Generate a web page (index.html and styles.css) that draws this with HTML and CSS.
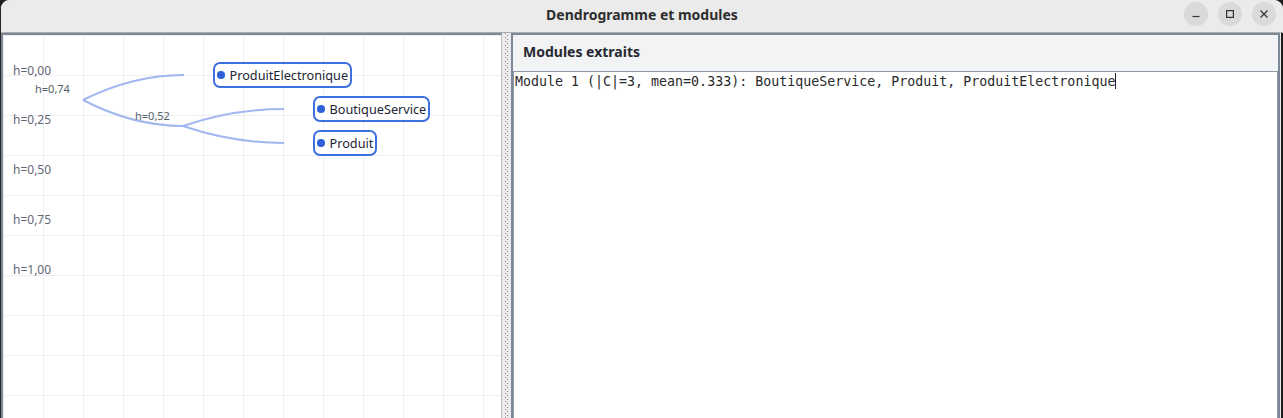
FILE: index.html
```html
<!DOCTYPE html>
<html lang="fr">
<head>
<meta charset="utf-8">
<title>Dendrogramme et modules</title>
<link rel="stylesheet" href="styles.css">
</head>
<body>
<div class="window">
  <header class="titlebar">
    <div class="title">Dendrogramme et modules</div>
    <div class="controls">
      <button class="ctl" aria-label="Réduire">
        <svg width="10" height="10" viewBox="0 0 10 10"><path d="M1.5 7.5h7" stroke="#333" stroke-width="1.2" fill="none"/></svg>
      </button>
      <button class="ctl" aria-label="Agrandir">
        <svg width="10" height="10" viewBox="0 0 10 10"><rect x="1.6" y="1.6" width="6.8" height="6.8" stroke="#333" stroke-width="1.2" fill="none"/></svg>
      </button>
      <button class="ctl" aria-label="Fermer">
        <svg width="10" height="10" viewBox="0 0 10 10"><path d="M1.5 1.5l7 7M8.5 1.5l-7 7" stroke="#333" stroke-width="1.2" fill="none"/></svg>
      </button>
    </div>
  </header>
  <main class="content">
    <section class="dendro">
      <svg class="links" width="498" height="383" viewBox="0 0 498 383">
        <g class="axis">
          <text x="10" y="40">h=0,00</text>
          <text x="10" y="89">h=0,25</text>
          <text x="10" y="139">h=0,50</text>
          <text x="10" y="189">h=0,75</text>
          <text x="10" y="239">h=1,00</text>
        </g>
        <g class="edges">
          <path d="M80 65 Q130 40 181 40"/>
          <path d="M80 65 Q130 91 180 91"/>
          <path d="M180 91 Q230 74 281 74"/>
          <path d="M180 91 Q230 108 281 108"/>
        </g>
        <g class="heights">
          <text x="32" y="58">h=0,74</text>
          <text x="132" y="85">h=0,52</text>
        </g>
      </svg>
      <div class="node" style="left:210px;top:27px"><span class="dot"></span>ProduitElectronique</div>
      <div class="node" style="left:310px;top:61px"><span class="dot"></span>BoutiqueService</div>
      <div class="node" style="left:310px;top:95px"><span class="dot"></span>Produit</div>
    </section>
    <div class="splitter"></div>
    <section class="modules">
      <div class="mod-header">Modules extraits</div>
      <div class="mod-text"><span>Module 1 (|C|=3, mean=0.333): BoutiqueService, Produit, ProduitElectronique</span><span class="caret"></span></div>
    </section>
  </main>
</div>
</body>
</html>
```
FILE: styles.css
```css
html, body {
  margin: 0;
  padding: 0;
  width: 1283px;
  height: 418px;
  overflow: hidden;
  background: #1e1e1e;
}

.window {
  width: 1283px;
  height: 418px;
  box-sizing: border-box;
  border-left: 1px solid #262626;
  border-top-left-radius: 9px;
  border-top-right-radius: 9px;
  overflow: hidden;
  display: flex;
  flex-direction: column;
  background: #ebebeb;
}

.titlebar {
  flex: none;
  height: 33px;
  box-sizing: border-box;
  padding-bottom: 4px;
  border-bottom: 1px solid #adadad;
  background: #ebebeb;
  display: grid;
  grid-template-columns: 1fr auto 1fr;
  align-items: center;
}

.title {
  grid-column: 2;
  font-family: "Noto Sans", "DejaVu Sans", sans-serif;
  font-weight: 700;
  font-size: 14px;
  color: #2e2e2e;
}

.controls {
  grid-column: 3;
  justify-self: end;
  display: flex;
  gap: 10px;
  padding-right: 7px;
}

.ctl {
  width: 24px;
  height: 24px;
  border: 0;
  padding: 0;
  border-radius: 50%;
  background: #dadada;
  display: grid;
  place-items: center;
}

.ctl svg { display: block; }

.content {
  flex: 1;
  min-height: 0;
  display: flex;
  border-right: 2px solid #1c1c1c;
  background: #ebebeb;
}

.dendro {
  position: relative;
  flex: none;
  width: 498px;
  border-top: 2px solid #7b8898;
  border-left: 2px solid #7b8898;
  border-right: 1px solid #b6bdc6;
  background-color: #ffffff;
  background-image:
    linear-gradient(to right, #eeeff1 1px, transparent 1px),
    linear-gradient(to bottom, #eeeff1 1px, transparent 1px);
  background-size: 40px 40px;
  overflow: hidden;
}

.links {
  position: absolute;
  left: 0;
  top: 0;
}

.axis text {
  font-family: "Noto Sans", "DejaVu Sans", sans-serif;
  font-size: 12px;
  fill: #5f6877;
}

.heights text {
  font-family: "Noto Sans", "DejaVu Sans", sans-serif;
  font-size: 11px;
  fill: #56606d;
}

.edges path {
  fill: none;
  stroke: #a2b7ef;
  stroke-width: 2;
}

.node {
  position: absolute;
  height: 26px;
  box-sizing: border-box;
  border: 2px solid #3e6fde;
  border-radius: 7px;
  background: #ffffff;
  display: flex;
  align-items: center;
  gap: 5px;
  padding: 0 2px 0 2px;
  font-family: "Noto Sans", "DejaVu Sans", sans-serif;
  font-size: 12.7px;
  color: #1e2634;
  white-space: nowrap;
}

.dot {
  width: 7.5px;
  height: 7.5px;
  border-radius: 50%;
  background: #2f62d9;
  flex: none;
}

.splitter {
  flex: none;
  width: 9px;
  background: #ebebeb;
  display: flex;
  justify-content: center;
}

.splitter::before {
  content: "";
  width: 3px;
  height: 100%;
  background-image:
    linear-gradient(#8c8c8c 1px, transparent 1px),
    linear-gradient(#8c8c8c 1px, transparent 1px);
  background-size: 1px 4px, 1px 4px;
  background-position: 0 0, 2px 2px;
  background-repeat: repeat-y;
}

.modules {
  flex: 1;
  min-width: 0;
  display: flex;
  flex-direction: column;
  border-top: 2px solid #7b8898;
  border-left: 2px solid #7b8898;
  border-right: 2px solid #7b8898;
  margin-right: 1px;
  background: #f2f3f5;
}

.mod-header {
  flex: none;
  height: 36px;
  line-height: 33px;
  padding-left: 10px;
  font-family: "Noto Sans", "DejaVu Sans", sans-serif;
  font-weight: 700;
  font-size: 14px;
  color: #262a30;
}

.mod-text {
  flex: 1;
  background: #ffffff;
  border-top: 1px solid #8d99a6;
  border-left: 1px solid #8d99a6;
  border-right: 1px solid #8d99a6;
  padding: 1px 1px 0 1px;
  font-family: "DejaVu Sans Mono", "Liberation Mono", monospace;
  font-size: 13.3px;
  line-height: 16px;
  color: #2a2a2a;
  white-space: pre;
}

.caret {
  display: inline-block;
  width: 1px;
  height: 16px;
  background: #222;
  vertical-align: -3px;
}
```
